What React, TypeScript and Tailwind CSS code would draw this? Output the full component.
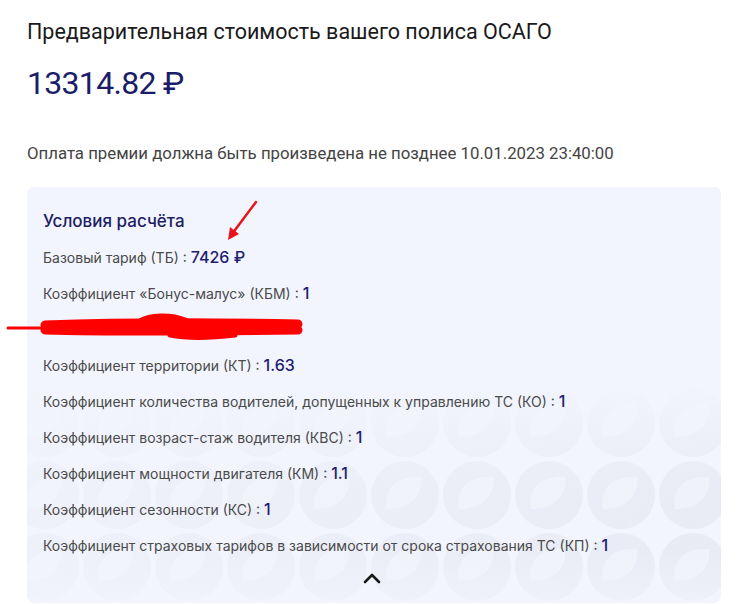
import React from "react";

const rows: { label: string; value: string }[] = [
  { label: "Базовый тариф (ТБ)", value: "7426 ₽" },
  { label: "Коэффициент «Бонус-малус» (КБМ)", value: "1" },
  { label: "", value: "" },
  { label: "Коэффициент территории (КТ)", value: "1.63" },
  { label: "Коэффициент количества водителей, допущенных к управлению ТС (КО)", value: "1" },
  { label: "Коэффициент возраст-стаж водителя (КВС)", value: "1" },
  { label: "Коэффициент мощности двигателя (КМ)", value: "1.1" },
  { label: "Коэффициент сезонности (КС)", value: "1" },
  { label: "Коэффициент страховых тарифов в зависимости от срока страхования ТС (КП)", value: "1" },
];

function Pattern() {
  const circles: React.ReactNode[] = [];
  for (let r = -3; r < 3; r++) {
    for (let c = -1; c < 11; c++) {
      const cx = c * 72 + 18;
      const cy = r * 72 + 236;
      circles.push(
        <g key={`${r}-${c}`}>
          <circle cx={cx} cy={cy} r={34} fill="#e5e7f2" />
          <path
            d={`M ${cx - 18} ${cy + 14} C ${cx - 22} ${cy - 4}, ${cx - 10} ${cy - 20}, ${cx + 16} ${cy - 18} C ${cx + 18} ${cy - 2}, ${cx + 8} ${cy + 14}, ${cx - 18} ${cy + 14} Z`}
            fill="#eff1f9"
          />
        </g>
      );
    }
  }
  return (
    <svg className="absolute inset-0 w-full h-full" aria-hidden>
      <defs>
        <linearGradient id="fade" x1="0" y1="0" x2="0" y2="1">
          <stop offset="0" stopColor="#f2f5fd" stopOpacity="1" />
          <stop offset="0.46" stopColor="#f2f5fd" stopOpacity="1" />
          <stop offset="0.72" stopColor="#f2f5fd" stopOpacity="0.3" />
          <stop offset="0.88" stopColor="#f2f5fd" stopOpacity="0.25" />
          <stop offset="1" stopColor="#f2f5fd" stopOpacity="0.7" />
        </linearGradient>
        <linearGradient id="fadeX" x1="0" y1="0" x2="1" y2="0">
          <stop offset="0" stopColor="#f2f5fd" stopOpacity="0.6" />
          <stop offset="0.5" stopColor="#f2f5fd" stopOpacity="0.3" />
          <stop offset="1" stopColor="#f2f5fd" stopOpacity="0" />
        </linearGradient>
      </defs>
      {circles}
      <rect x="0" y="0" width="100%" height="100%" fill="url(#fadeX)" />
      <rect x="0" y="0" width="100%" height="100%" fill="url(#fade)" />
    </svg>
  );
}

export default function App() {
  return (
    <div className="w-[744px] h-[604px] bg-white relative overflow-hidden" style={{ fontFamily: "Inter, 'Noto Sans', sans-serif" }}>
      <div className="pl-[27px] pr-[23px] pt-[19px]">
        <h1 className="text-[21.5px] leading-[26px] text-[#1a1a1a] font-normal" style={{ fontFamily: "Roboto, sans-serif" }}>
          Предварительная стоимость вашего полиса ОСАГО
        </h1>
        <div className="mt-[18px] text-[32px] leading-[40px] text-[#1b1d6b] font-normal tracking-[-0.7px]" style={{ fontFamily: "Roboto, sans-serif" }}>
          13314.82 ₽
        </div>
        <p className="mt-[39px] text-[16.8px] leading-[22px] text-[#444]" style={{ fontFamily: "Roboto, sans-serif" }}>
          Оплата премии должна быть произведена не позднее 10.01.2023 23:40:00
        </p>
        <div className="mt-[23px] relative rounded-[8px] bg-[#f2f5fd] overflow-hidden h-[416px]">
          <Pattern />
          <div className="relative pl-[16px] pt-[23px]">
            <div className="text-[17px] leading-[22px] font-medium text-[#1d2163]">Условия расчёта</div>
            <div className="mt-[7px] flex flex-col">
              {rows.map((r, i) => (
                <div key={i} className="h-[36px] flex items-center">
                  {r.label && (
                    <>
                      <span className="text-[14px] text-[#4a4a4a]">{r.label} : </span>
                      <span className="ml-[4px] text-[16px] font-medium text-[#1e2070]">{r.value}</span>
                    </>
                  )}
                </div>
              ))}
            </div>
            <div className="flex justify-center mt-[9px] ml-[-16px] w-[694px]">
              <svg width="18" height="12" viewBox="0 0 18 12" className="ml-[-4px]">
                <path d="M2 10 L9 3 L16 10" stroke="#1a1a1a" strokeWidth="2.6" fill="none" strokeLinecap="round" strokeLinejoin="round" />
              </svg>
            </div>
          </div>
        </div>
      </div>
      {/* redaction scribble */}
      <svg className="absolute left-0 top-[312px]" width="310" height="34" aria-hidden>
        <path d="M8 16 L45 16" stroke="#ff0000" strokeWidth="3" strokeLinecap="round" />
        <path d="M45 13 C100 11, 200 10, 298 12" stroke="#ff0000" strokeWidth="9" fill="none" strokeLinecap="round" />
        <path d="M45 18 C120 20, 220 19, 298 18" stroke="#ff0000" strokeWidth="9" fill="none" strokeLinecap="round" />
        <path d="M140 10 C150 4, 170 3, 185 9" stroke="#ff0000" strokeWidth="7" fill="none" strokeLinecap="round" />
        <path d="M170 23 C190 27, 210 26, 235 23" stroke="#ff0000" strokeWidth="5" fill="none" strokeLinecap="round" />
      </svg>
      {/* arrow */}
      <svg className="absolute left-[220px] top-[198px]" width="44" height="48" aria-hidden>
        <path d="M36 4 L12 36" stroke="#e8141b" strokeWidth="2.5" strokeLinecap="round" />
        <path d="M8 42 L10 29 L19 36 Z" fill="#e8141b" />
      </svg>
    </div>
  );
}
